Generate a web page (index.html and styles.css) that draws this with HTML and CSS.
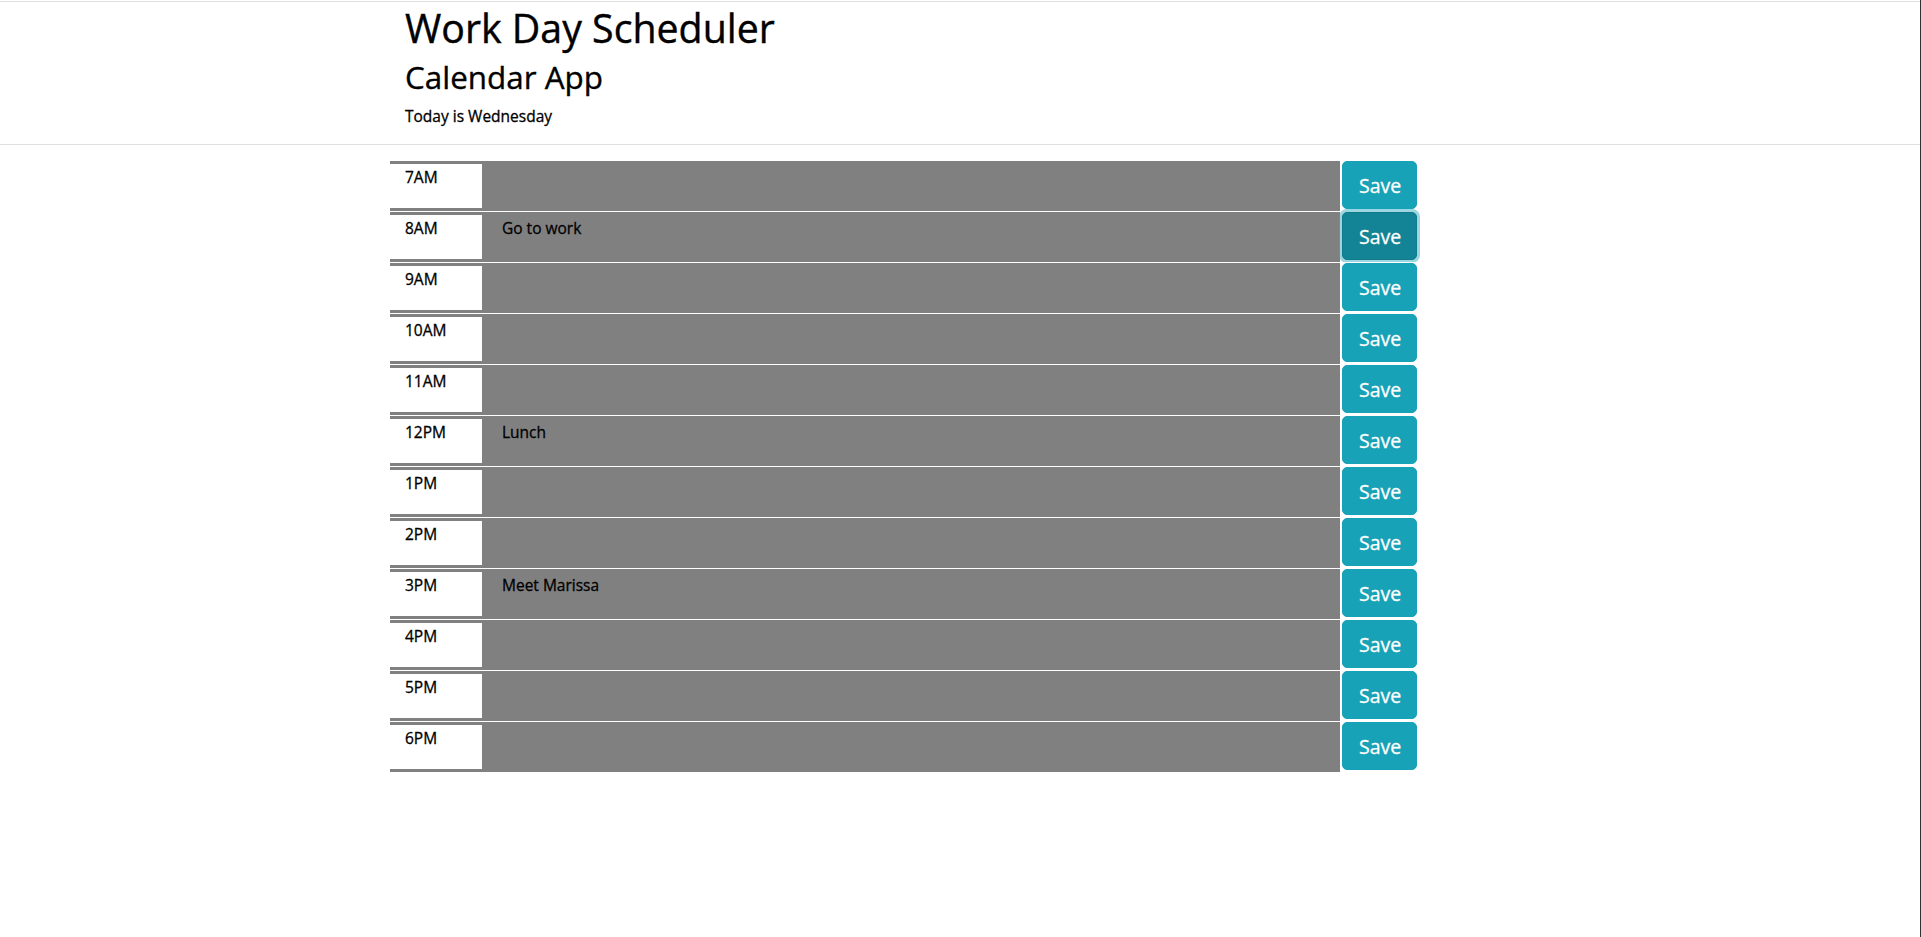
FILE: index.html
```html
<!DOCTYPE html>
<html lang="en">
<head>
<meta charset="utf-8">
<title>Work Day Scheduler</title>
<link rel="stylesheet" href="styles.css">
</head>
<body>
<header class="header">
  <div class="container header-inner">
    <h1 class="title">Work Day Scheduler</h1>
    <h2 class="subtitle">Calendar App</h2>
    <p class="today">Today is Wednesday</p>
  </div>
</header>
<main class="container schedule">
  <div class="time-block"><div class="hour">7AM</div><textarea class="description"></textarea><button class="save-btn">Save</button></div>
  <div class="time-block"><div class="hour">8AM</div><textarea class="description">Go to work</textarea><button class="save-btn is-focused">Save</button></div>
  <div class="time-block"><div class="hour">9AM</div><textarea class="description"></textarea><button class="save-btn">Save</button></div>
  <div class="time-block"><div class="hour">10AM</div><textarea class="description"></textarea><button class="save-btn">Save</button></div>
  <div class="time-block"><div class="hour">11AM</div><textarea class="description"></textarea><button class="save-btn">Save</button></div>
  <div class="time-block"><div class="hour">12PM</div><textarea class="description">Lunch</textarea><button class="save-btn">Save</button></div>
  <div class="time-block"><div class="hour">1PM</div><textarea class="description"></textarea><button class="save-btn">Save</button></div>
  <div class="time-block"><div class="hour">2PM</div><textarea class="description"></textarea><button class="save-btn">Save</button></div>
  <div class="time-block"><div class="hour">3PM</div><textarea class="description">Meet Marissa</textarea><button class="save-btn">Save</button></div>
  <div class="time-block"><div class="hour">4PM</div><textarea class="description"></textarea><button class="save-btn">Save</button></div>
  <div class="time-block"><div class="hour">5PM</div><textarea class="description"></textarea><button class="save-btn">Save</button></div>
  <div class="time-block"><div class="hour">6PM</div><textarea class="description"></textarea><button class="save-btn">Save</button></div>
</main>
</body>
</html>
```

FILE: styles.css
```css
* { box-sizing: border-box; }

html {
  min-height: 100%;
  border-right: 1px solid #333333;
}

body {
  margin: 0;
  padding-top: 1px;
  font-family: "Open Sans", "Noto Sans", sans-serif;
  color: #000000;
  background: #ffffff;
}

.container {
  width: 1140px;
  margin: 0 auto;
}

.header {
  border-top: 1px solid #e0e0e0;
  border-bottom: 1px solid #e0e0e0;
}

.header-inner {
  padding: 2px 15px 16px;
}

.title {
  margin: 0;
  font-size: 39.3px;
  font-weight: 400;
  line-height: 48px;
  -webkit-text-stroke: 0.4px currentColor;
}

.subtitle {
  margin: 6px 0 0;
  font-size: 31.4px;
  font-weight: 400;
  line-height: 38px;
  -webkit-text-stroke: 0.35px currentColor;
}

.today {
  margin: 8px 0 0;
  font-size: 15.5px;
  font-weight: 500;
  line-height: 24px;
  -webkit-text-stroke: 0.3px currentColor;
}

.schedule {
  margin-top: 15px;
  display: flex;
  flex-direction: column;
}

.time-block {
  display: flex;
  align-items: flex-start;
  height: 51px;
  border-top: 1px solid #ffffff;
}

.hour {
  width: 92px;
  height: 50px;
  padding: 1px 0 0 15px;
  background: #ffffff;
  border-top: 3px solid #808080;
  border-bottom: 3px solid #808080;
  font-size: 15.5px;
  font-weight: 500;
  line-height: 24px;
  color: #000000;
  -webkit-text-stroke: 0.3px currentColor;
}

.description {
  display: block;
  width: 858px;
  height: 50px;
  margin: 0;
  padding: 4px 20px 0;
  border: 0;
  background: #808080;
  font-family: inherit;
  font-size: 15.5px;
  font-weight: 500;
  line-height: 24px;
  color: #000000;
  resize: none;
  outline: none;
  -webkit-text-stroke: 0.3px currentColor;
}

.save-btn {
  width: 75px;
  height: 48px;
  margin-left: 2px;
  padding: 9px 16px 7px;
  border: 1px solid #17a2b8;
  border-radius: 5px;
  background: #17a2b8;
  color: #ffffff;
  font-family: inherit;
  font-size: 19.5px;
  line-height: 30px;
  cursor: pointer;
  -webkit-text-stroke: 0.3px currentColor;
}

.save-btn.is-focused {
  background: #138496;
  border-color: #117a8b;
  box-shadow: 0 0 0 3px rgba(58, 176, 195, 0.5);
}
```
